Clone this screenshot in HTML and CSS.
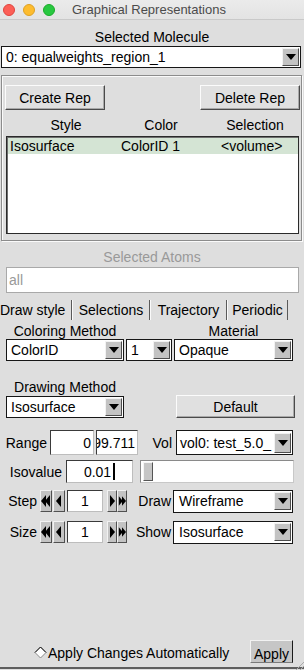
FILE: index.html
```html
<!DOCTYPE html>
<html lang="en">
<head>
    <meta charset="UTF-8">
    <meta name="viewport" content="width=device-width, initial-scale=1.0">
    <title>Graphical Representations</title>
    <link rel="stylesheet" href="styles.css">
</head>
<body>
    <div class="titlebar">
        <div class="lights">
            <span class="light close"></span>
            <span class="light minimize"></span>
            <span class="light zoom"></span>
        </div>
        <div class="title">Graphical Representations</div>
    </div>

    <div class="caption mol-caption">Selected Molecule</div>
    <div class="menu molecule"><span class="value">0: equalweights_region_1</span><span class="arrow"></span></div>

    <div class="rep-frame">
        <div class="btn-row">
            <div class="btn rep-btn">Create Rep</div>
            <div class="btn rep-btn">Delete Rep</div>
        </div>
        <div class="list-head">
            <span class="head-style">Style</span>
            <span class="head-color">Color</span>
            <span class="head-sel">Selection</span>
        </div>
        <div class="listbox">
            <div class="list-row selected">
                <span>Isosurface</span>
                <span>ColorID 1</span>
                <span>&lt;volume&gt;</span>
            </div>
        </div>
    </div>

    <div class="caption muted atoms-caption">Selected Atoms</div>
    <div class="atoms-entry">all</div>

    <div class="tabs">
        <div class="tab active">Draw style</div>
        <div class="tab">Selections</div>
        <div class="tab">Trajectory</div>
        <div class="tab">Periodic</div>
    </div>

    <div class="cols label-row">
        <div class="col-left">Coloring Method</div>
        <div class="col-right">Material</div>
    </div>
    <div class="cols">
        <div class="menu col-left"><span class="value">ColorID</span><span class="arrow"></span></div>
        <div class="menu col-mid"><span class="value">1</span><span class="arrow"></span></div>
        <div class="menu col-right"><span class="value">Opaque</span><span class="arrow"></span></div>
    </div>

    <div class="cols label-row draw-label">
        <div class="col-left">Drawing Method</div>
    </div>
    <div class="cols">
        <div class="menu col-left"><span class="value">Isosurface</span><span class="arrow"></span></div>
        <div class="btn default-btn">Default</div>
    </div>

    <div class="param-row range-row">
        <span class="lbl range-lbl">Range</span>
        <div class="entry range-min">0</div>
        <div class="entry range-max"><span>99.711</span></div>
        <span class="lbl vol-lbl">Vol</span>
        <div class="menu vol-menu"><span class="value">vol0: test_5.0_</span><span class="arrow"></span></div>
    </div>

    <div class="param-row iso-row">
        <span class="lbl iso-lbl">Isovalue</span>
        <div class="entry iso-entry"><span>0.01</span><span class="cursor"></span></div>
        <div class="slider"><span class="handle"></span></div>
    </div>

    <div class="param-row step-row">
        <span class="lbl step-lbl">Step</span>
        <div class="btn spin fast"><svg width="10" height="14" viewBox="0 0 10 14"><polygon points="0,7 5,1 5,13"/><polygon points="4,7 9,1 9,13"/></svg></div>
        <div class="btn spin"><svg width="6" height="14" viewBox="0 0 6 14"><polygon points="0,7 5,1 5,13"/></svg></div>
        <div class="entry spin-entry">1</div>
        <div class="btn spin right"><svg width="6" height="14" viewBox="0 0 6 14"><polygon points="6,7 1,1 1,13"/></svg></div>
        <div class="btn spin fast right"><svg width="10" height="14" viewBox="0 0 10 14"><polygon points="10,7 5,1 5,13"/><polygon points="6,7 1,1 1,13"/></svg></div>
        <span class="lbl side-lbl">Draw</span>
        <div class="menu side-menu"><span class="value">Wireframe</span><span class="arrow"></span></div>
    </div>

    <div class="param-row step-row size-row">
        <span class="lbl step-lbl">Size</span>
        <div class="btn spin fast"><svg width="10" height="14" viewBox="0 0 10 14"><polygon points="0,7 5,1 5,13"/><polygon points="4,7 9,1 9,13"/></svg></div>
        <div class="btn spin"><svg width="6" height="14" viewBox="0 0 6 14"><polygon points="0,7 5,1 5,13"/></svg></div>
        <div class="entry spin-entry">1</div>
        <div class="btn spin right"><svg width="6" height="14" viewBox="0 0 6 14"><polygon points="6,7 1,1 1,13"/></svg></div>
        <div class="btn spin fast right"><svg width="10" height="14" viewBox="0 0 10 14"><polygon points="10,7 5,1 5,13"/><polygon points="6,7 1,1 1,13"/></svg></div>
        <span class="lbl side-lbl">Show</span>
        <div class="menu side-menu"><span class="value">Isosurface</span><span class="arrow"></span></div>
    </div>

    <div class="spacer"></div>

    <div class="footer">
        <span class="radio"><svg width="13" height="13" viewBox="0 0 13 13"><polygon points="6.5,1 12,6.5 6.5,12 1,6.5" fill="#fff" stroke="#8a8a8a"/><polyline points="1,6.5 6.5,1 12,6.5" fill="none" stroke="#111"/></svg></span>
        <span class="auto-lbl">Apply Changes Automatically</span>
        <div class="btn apply-btn">Apply</div>
    </div>
    <div class="bottom-line"></div>

    <svg class="grip" width="9" height="9" viewBox="0 0 9 9"><line x1="9" y1="1" x2="1" y2="9" stroke="#aaa"/><line x1="9" y1="5" x2="5" y2="9" stroke="#aaa"/></svg>
</body>
</html>
```

FILE: styles.css
```css
body {
    margin: 0;
    width: 304px;
    height: 670px;
    overflow: hidden;
    position: relative;
    display: flex;
    flex-direction: column;
    background-color: #dedede;
    color: #000;
    font-family: "Liberation Sans", Arial, sans-serif;
    font-size: 14px;
}

/* Title bar */
.titlebar {
    height: 19px;
    flex-shrink: 0;
    display: flex;
    align-items: center;
    background: linear-gradient(#ebebeb, #e3e3e3);
    border-bottom: 1px solid #c9c9c9;
}

.lights {
    display: flex;
    gap: 8px;
    padding-left: 3px;
}

.light {
    width: 12px;
    height: 12px;
    border-radius: 50%;
    box-sizing: border-box;
}

.light.close { background: #fc5f57; border: 1px solid #e0443e; }
.light.minimize { background: #fdbc2e; border: 1px solid #dea123; }
.light.zoom { background: #28c840; border: 1px solid #1aab29; }

.title {
    margin-left: 17px;
    font-size: 13px;
    color: #4b4b4b;
}

/* Captions */
.caption {
    text-align: center;
    line-height: 17px;
}

.mol-caption { margin-top: 9px; }

.muted { color: #999; }

.atoms-caption {
    margin-top: 8px;
    line-height: 16px;
}

/* Option menus */
.menu {
    height: 22px;
    box-sizing: border-box;
    display: flex;
    align-items: center;
    background: #fff;
    border: 1px solid #161616;
    flex-shrink: 0;
}

.menu .value {
    flex: 1;
    min-width: 0;
    overflow: hidden;
    white-space: nowrap;
    padding-left: 4px;
}

.menu .arrow {
    width: 17px;
    height: 18px;
    margin-right: 1px;
    box-sizing: border-box;
    flex-shrink: 0;
    display: flex;
    align-items: center;
    justify-content: center;
    background: #c3c3c3;
    border: 1px solid;
    border-color: #f2f2f2 #4d4d4d #4d4d4d #f2f2f2;
}

.menu .arrow::after {
    content: "";
    border-left: 5px solid transparent;
    border-right: 5px solid transparent;
    border-top: 6px solid #000;
}

.molecule {
    margin: 0 3px 0 1px;
}

/* Buttons */
.btn {
    box-sizing: border-box;
    display: flex;
    align-items: center;
    justify-content: center;
    background: #e0e0e0;
    border: 1px solid;
    border-color: #fbfbfb #4a4a4a #4a4a4a #fbfbfb;
    box-shadow: inset -1px -1px #a9a9a9;
    flex-shrink: 0;
}

/* Rep frame */
.rep-frame {
    margin: 7px 2px 0 1px;
    padding: 9px 1px 6px 3px;
    border: 1px solid #8c8c8c;
    box-shadow: inset 1px 1px #fafafa, 1px 1px #fafafa;
}

.btn-row {
    display: flex;
    justify-content: space-between;
}

.rep-btn {
    width: 100px;
    height: 25px;
}

.list-head {
    display: flex;
    margin-top: 7px;
    line-height: 16px;
}

.list-head span {
    flex-shrink: 0;
    text-align: center;
}

.head-style { width: 122px; }
.head-color { width: 68px; }
.head-sel { width: 120px; }

.listbox {
    height: 98px;
    box-sizing: border-box;
    margin: 3px 1px 0 1px;
    background: #fff;
    border: 1px solid #2a2a2a;
    box-shadow: inset 1px 1px #6e6e6e;
}

.list-row {
    display: grid;
    grid-template-columns: 111px 100px auto;
    height: 16px;
    line-height: 16px;
    margin: 1px 0 0 1px;
    padding-left: 2px;
}

.list-row.selected {
    background: #d4e4d4;
}

/* Selected atoms */
.atoms-entry {
    height: 26px;
    box-sizing: border-box;
    margin: 2px 5px 0 6px;
    padding-left: 2px;
    line-height: 24px;
    color: #999;
    background: #fff;
    border: 1px solid #a9a9a9;
}

/* Tabs */
.tabs {
    display: flex;
    height: 20px;
    margin-top: 7px;
    line-height: 20px;
}

.tab {
    box-sizing: border-box;
    text-align: center;
    border-right: 1px solid #5a5a5a;
    border-left: 1px solid #fafafa;
}

.tab:nth-child(1) { width: 72px; text-align: left; border-left: none; }
.tab:nth-child(2) { width: 78px; }
.tab:nth-child(3) { width: 77px; }
.tab:nth-child(4) { width: 61px; }

/* Two-column controls */
.cols {
    display: flex;
    padding-left: 6px;
}

.col-left { width: 118px; flex-shrink: 0; }
.col-mid { width: 46px; margin-left: 2px; }
.col-right { width: 119px; flex-shrink: 0; margin-left: 2px; }

.label-row {
    margin-top: 4px;
    line-height: 15px;
}

.label-row div {
    text-align: center;
}

.label-row .col-right {
    margin-left: 50px;
}

.draw-label {
    margin-top: 19px;
    margin-bottom: 1px;
}

.default-btn {
    width: 119px;
    height: 23px;
    margin-left: 52px;
    margin-top: -1px;
}

/* Parameter rows */
.param-row {
    display: flex;
    align-items: center;
}

.lbl {
    flex-shrink: 0;
    text-align: right;
}

.entry {
    box-sizing: border-box;
    flex-shrink: 0;
    display: flex;
    align-items: center;
    justify-content: flex-end;
    overflow: hidden;
    white-space: nowrap;
    background: #fff;
    border: 1px solid;
    border-color: #3a3a3a #bdbdbd #bdbdbd #3a3a3a;
}

.range-row {
    height: 25px;
    margin-top: 12px;
}

.range-row .entry {
    height: 25px;
    padding-right: 2px;
}

.range-lbl { width: 47px; }
.range-min { width: 44px; margin-left: 3px; }
.range-max { width: 42px; margin-left: 2px; }
.vol-lbl { width: 34px; }

.vol-menu {
    width: 117px;
    height: 25px;
    margin-left: 4px;
}

.vol-menu .value { padding-left: 3px; }

.vol-menu .arrow { height: 20px; }

.iso-row {
    height: 23px;
    margin-top: 5px;
}

.iso-lbl { width: 62px; }

.iso-entry {
    width: 67px;
    height: 23px;
    margin-left: 4px;
    justify-content: center;
}

.cursor {
    width: 2px;
    height: 17px;
    margin-left: 2px;
    background: #000;
}

.slider {
    width: 154px;
    height: 23px;
    margin-left: 7px;
    box-sizing: border-box;
    padding: 1px 2px;
    display: flex;
    background: #fff;
    border: 1px solid;
    border-color: #8a8a8a #c8c8c8 #c8c8c8 #8a8a8a;
}

.handle {
    width: 10px;
    box-sizing: border-box;
    background: #c6c6c6;
    border: 1px solid;
    border-color: #f5f5f5 #555 #555 #f5f5f5;
}

.step-row {
    height: 22px;
    margin-top: 7px;
}

.size-row {
    margin-top: 9px;
}

.step-lbl { width: 37px; }

.spin {
    width: 12px;
    height: 22px;
    margin-left: 1px;
    background: #c3c3c3;
    box-shadow: none;
    border-color: #f2f2f2 #505050 #505050 #f2f2f2;
}

.spin.fast { margin-left: 3px; }
.spin.right { width: 10px; margin-left: 0; }
.spin.right:not(.fast) { margin-left: 4px; }
.spin svg { fill: #000; }

.spin-entry {
    width: 36px;
    height: 22px;
    margin-left: 2px;
    justify-content: center;
}

.side-lbl { width: 44px; }

.side-menu {
    width: 120px;
    height: 23px;
    margin-left: 2px;
}

.side-menu .value { padding-left: 5px; }

.spacer { flex: 1; }

/* Footer */
.footer {
    height: 23px;
    flex-shrink: 0;
    display: flex;
    align-items: center;
    padding-right: 11px;
    margin-bottom: 4px;
}

.radio {
    display: flex;
    margin-left: 34px;
    margin-top: 2px;
}

.auto-lbl {
    margin-left: 1px;
    margin-top: 3px;
}

.apply-btn {
    width: 43px;
    height: 23px;
    margin-left: auto;
    padding-top: 4px;
    background: #c6c6c6;
    box-shadow: none;
    border-color: #f2f2f2 #1a1a1a #7a7a7a #f2f2f2;
}

.bottom-line {
    height: 2px;
    flex-shrink: 0;
    margin-bottom: 1px;
    background: #5e5e5e;
}

.grip {
    position: absolute;
    right: 0;
    bottom: 0;
}
```
